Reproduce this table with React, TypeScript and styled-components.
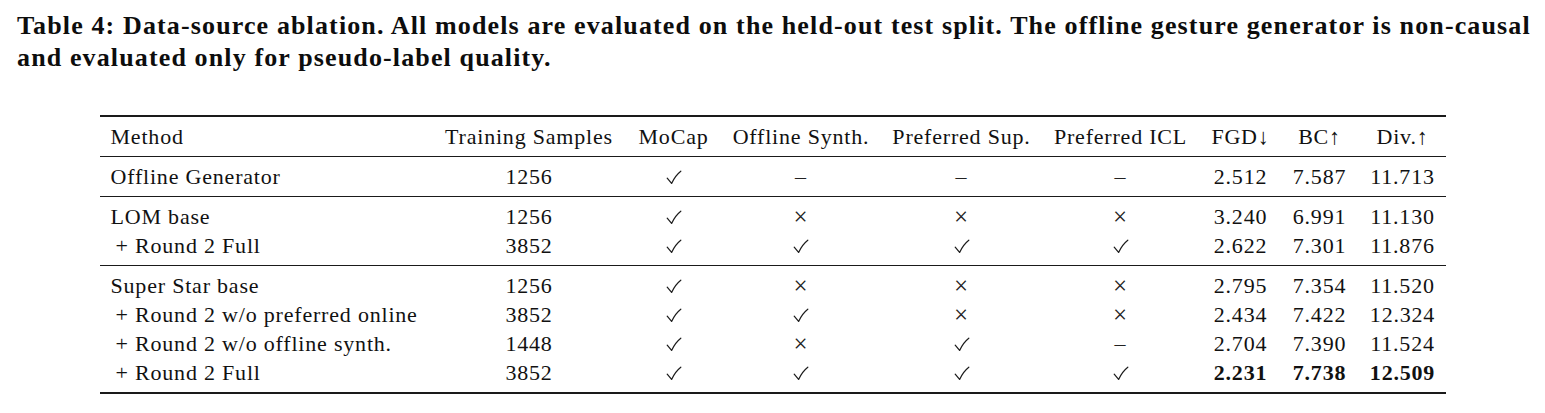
import React from "react";
import styled, { createGlobalStyle } from "styled-components";

const GlobalStyle = createGlobalStyle`
  html, body {
    margin: 0;
    padding: 0;
    background: #ffffff;
  }
  body {
    font-family: "Liberation Serif", "Times New Roman", serif;
    color: #111111;
  }
`;

const COLUMNS = "330px 199px 90px 165px 156px 162px 78px 80px 86px";

const Page = styled.div`
  width: 1545px;
  height: 413px;
  overflow: hidden;
`;

const Caption = styled.p`
  margin: 0;
  padding: 10px 0 0 17px;
  font-size: 26px;
  line-height: 32px;
  font-weight: 700;
  letter-spacing: 1.13px;
  color: #0d0d0d;
  white-space: nowrap;
`;

const Table = styled.div`
  width: 1346px;
  margin: 41px auto 0;
  display: flex;
  flex-direction: column;
  font-size: 22px;
  letter-spacing: 0.8px;
`;

const Rule = styled.div<{ $heavy?: boolean }>`
  height: ${({ $heavy }) => ($heavy ? 2 : 1)}px;
  background: #1a1a1a;
`;

const Group = styled.div`
  padding: 5px 0;
`;

const Row = styled.div`
  display: grid;
  grid-template-columns: ${COLUMNS};
  height: 29px;
  align-items: center;
`;

const Cell = styled.div<{ $left?: boolean; $indent?: boolean; $bold?: boolean }>`
  text-align: ${({ $left }) => ($left ? "left" : "center")};
  padding-left: ${({ $left, $indent }) => ($left ? ($indent ? 16 : 11) : 0)}px;
  font-weight: ${({ $bold }) => ($bold ? 700 : 400)};
  white-space: nowrap;
`;

const Mark = styled.span<{ $kind: "cross" | "dash" }>`
  font-size: ${({ $kind }) => ($kind === "cross" ? 25 : 22)}px;
  color: #222;
`;

const CheckIcon = styled.svg`
  display: inline-block;
  width: 16px;
  height: 15px;
  vertical-align: -1px;
`;

const Check = () => (
  <CheckIcon viewBox="0 0 16 15" aria-label="✓">
    <path
      d="M1.2 8.2 L5.6 13.4 Q9.2 5.6 14.8 1.2"
      fill="none"
      stroke="#1c1c1c"
      strokeWidth="1.25"
      strokeLinecap="round"
      strokeLinejoin="round"
    />
  </CheckIcon>
);

type Val = string;

interface RowData {
  method: string;
  indent?: boolean;
  samples: string;
  marks: Val[];
  metrics: string[];
  bold?: boolean;
}

const groups: RowData[][] = [
  [
    {
      method: "Offline Generator",
      samples: "1256",
      marks: ["y", "-", "-", "-"],
      metrics: ["2.512", "7.587", "11.713"],
    },
  ],
  [
    {
      method: "LOM base",
      samples: "1256",
      marks: ["y", "x", "x", "x"],
      metrics: ["3.240", "6.991", "11.130"],
    },
    {
      method: "+ Round 2 Full",
      indent: true,
      samples: "3852",
      marks: ["y", "y", "y", "y"],
      metrics: ["2.622", "7.301", "11.876"],
    },
  ],
  [
    {
      method: "Super Star base",
      samples: "1256",
      marks: ["y", "x", "x", "x"],
      metrics: ["2.795", "7.354", "11.520"],
    },
    {
      method: "+ Round 2 w/o preferred online",
      indent: true,
      samples: "3852",
      marks: ["y", "y", "x", "x"],
      metrics: ["2.434", "7.422", "12.324"],
    },
    {
      method: "+ Round 2 w/o offline synth.",
      indent: true,
      samples: "1448",
      marks: ["y", "x", "y", "-"],
      metrics: ["2.704", "7.390", "11.524"],
    },
    {
      method: "+ Round 2 Full",
      indent: true,
      samples: "3852",
      marks: ["y", "y", "y", "y"],
      metrics: ["2.231", "7.738", "12.509"],
      bold: true,
    },
  ],
];

const renderMark = (v: Val) => {
  if (v === "y") return <Check />;
  if (v === "x") return <Mark $kind="cross">×</Mark>;
  return <Mark $kind="dash">–</Mark>;
};

const headers = [
  "Training Samples",
  "MoCap",
  "Offline Synth.",
  "Preferred Sup.",
  "Preferred ICL",
  "FGD↓",
  "BC↑",
  "Div.↑",
];

export default function App() {
  return (
    <Page>
      <GlobalStyle />
      <Caption>
        Table 4: Data-source ablation. All models are evaluated on the held-out test split. The
        offline gesture generator is non-causal
        <br />
        and evaluated only for pseudo-label quality.
      </Caption>
      <Table>
        <Rule $heavy />
        <Group>
          <Row>
            <Cell $left>Method</Cell>
            {headers.map((h) => (
              <Cell key={h}>{h}</Cell>
            ))}
          </Row>
        </Group>
        {groups.map((g, gi) => (
          <React.Fragment key={gi}>
            <Rule />
            <Group>
              {g.map((r, ri) => (
                <Row key={ri}>
                  <Cell $left $indent={r.indent}>
                    {r.method}
                  </Cell>
                  <Cell>{r.samples}</Cell>
                  {r.marks.map((m, mi) => (
                    <Cell key={mi}>{renderMark(m)}</Cell>
                  ))}
                  {r.metrics.map((m, mi) => (
                    <Cell key={mi} $bold={r.bold}>
                      {m}
                    </Cell>
                  ))}
                </Row>
              ))}
            </Group>
          </React.Fragment>
        ))}
        <Rule $heavy />
      </Table>
    </Page>
  );
}
